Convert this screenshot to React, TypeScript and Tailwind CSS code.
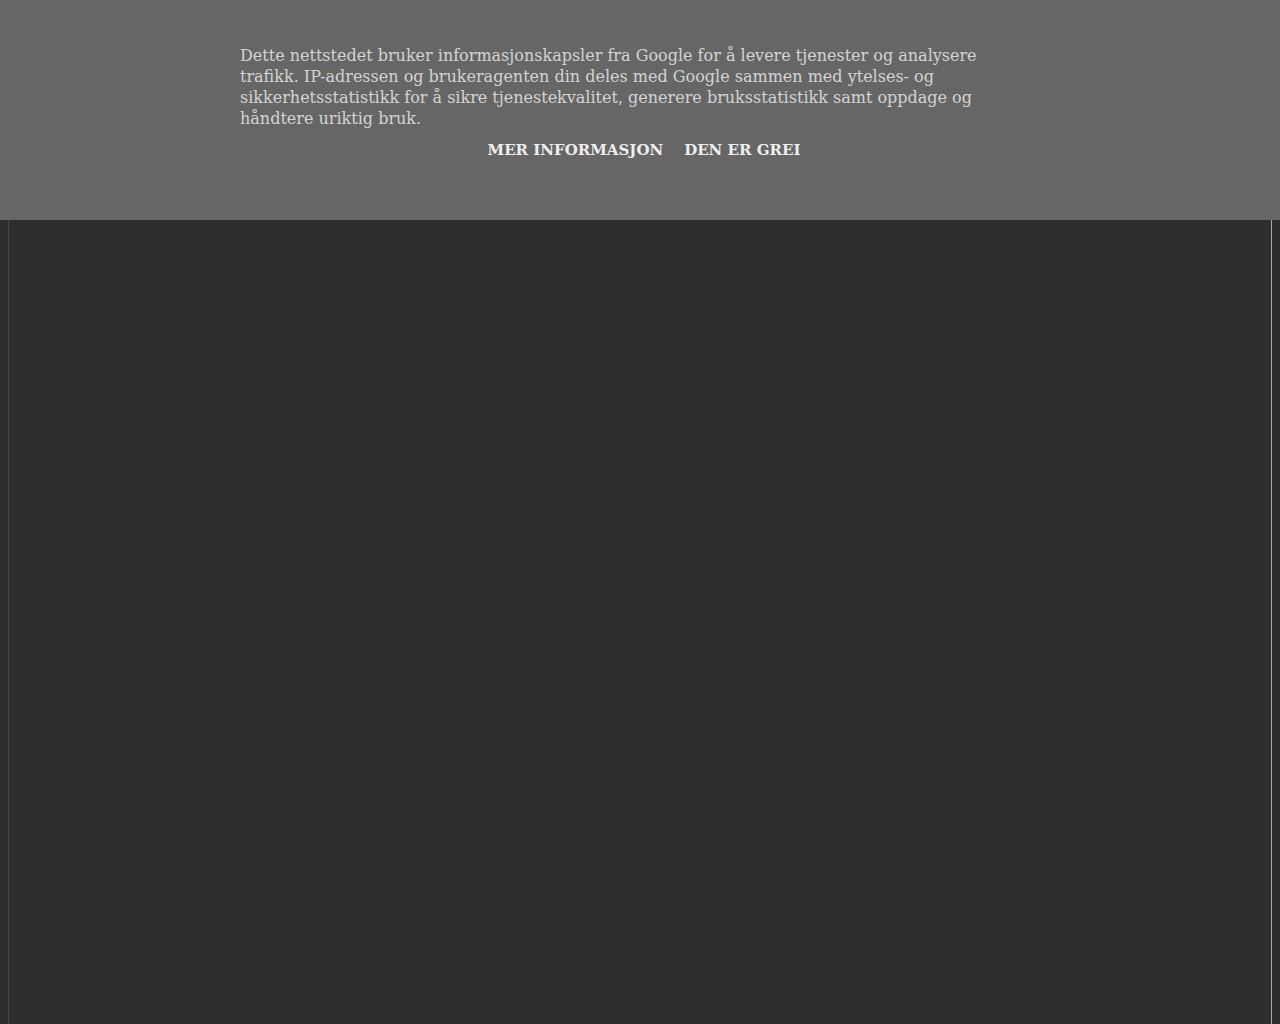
export default function App() {
  return (
    <div className="min-h-[1024px] bg-[#2d2e30] relative overflow-hidden" style={{ fontFamily: '"DejaVu Serif", serif' }}>
      <div className="flex h-[1024px]">
        <div className="w-[8px]" />
        <div className="w-px bg-[#48494b]" />
        <div className="flex-1" />
        <div className="w-px bg-[#a9a9a9]" />
        <div className="w-[8px]" />
      </div>
      <div className="absolute top-0 left-0 right-0 h-[220px] bg-[#666666]">
        <div className="w-[800px] mx-auto pt-[45px]">
          <p className="text-[16px] leading-[21px] text-[#d4d4d4]">
            Dette nettstedet bruker informasjonskapsler fra Google for å levere tjenester og analysere trafikk. IP-adressen og brukeragenten din deles med Google sammen med ytelses- og sikkerhetsstatistikk for å sikre tjenestekvalitet, generere bruksstatistikk samt oppdage og håndtere uriktig bruk.
          </p>
          <div className="flex justify-center gap-[21px] mt-[11px] pl-[8px] text-[15px] leading-[21px] font-bold text-[#eeeeee]">
            <span>MER INFORMASJON</span>
            <span>DEN ER GREI</span>
          </div>
        </div>
      </div>
    </div>
  );
}
